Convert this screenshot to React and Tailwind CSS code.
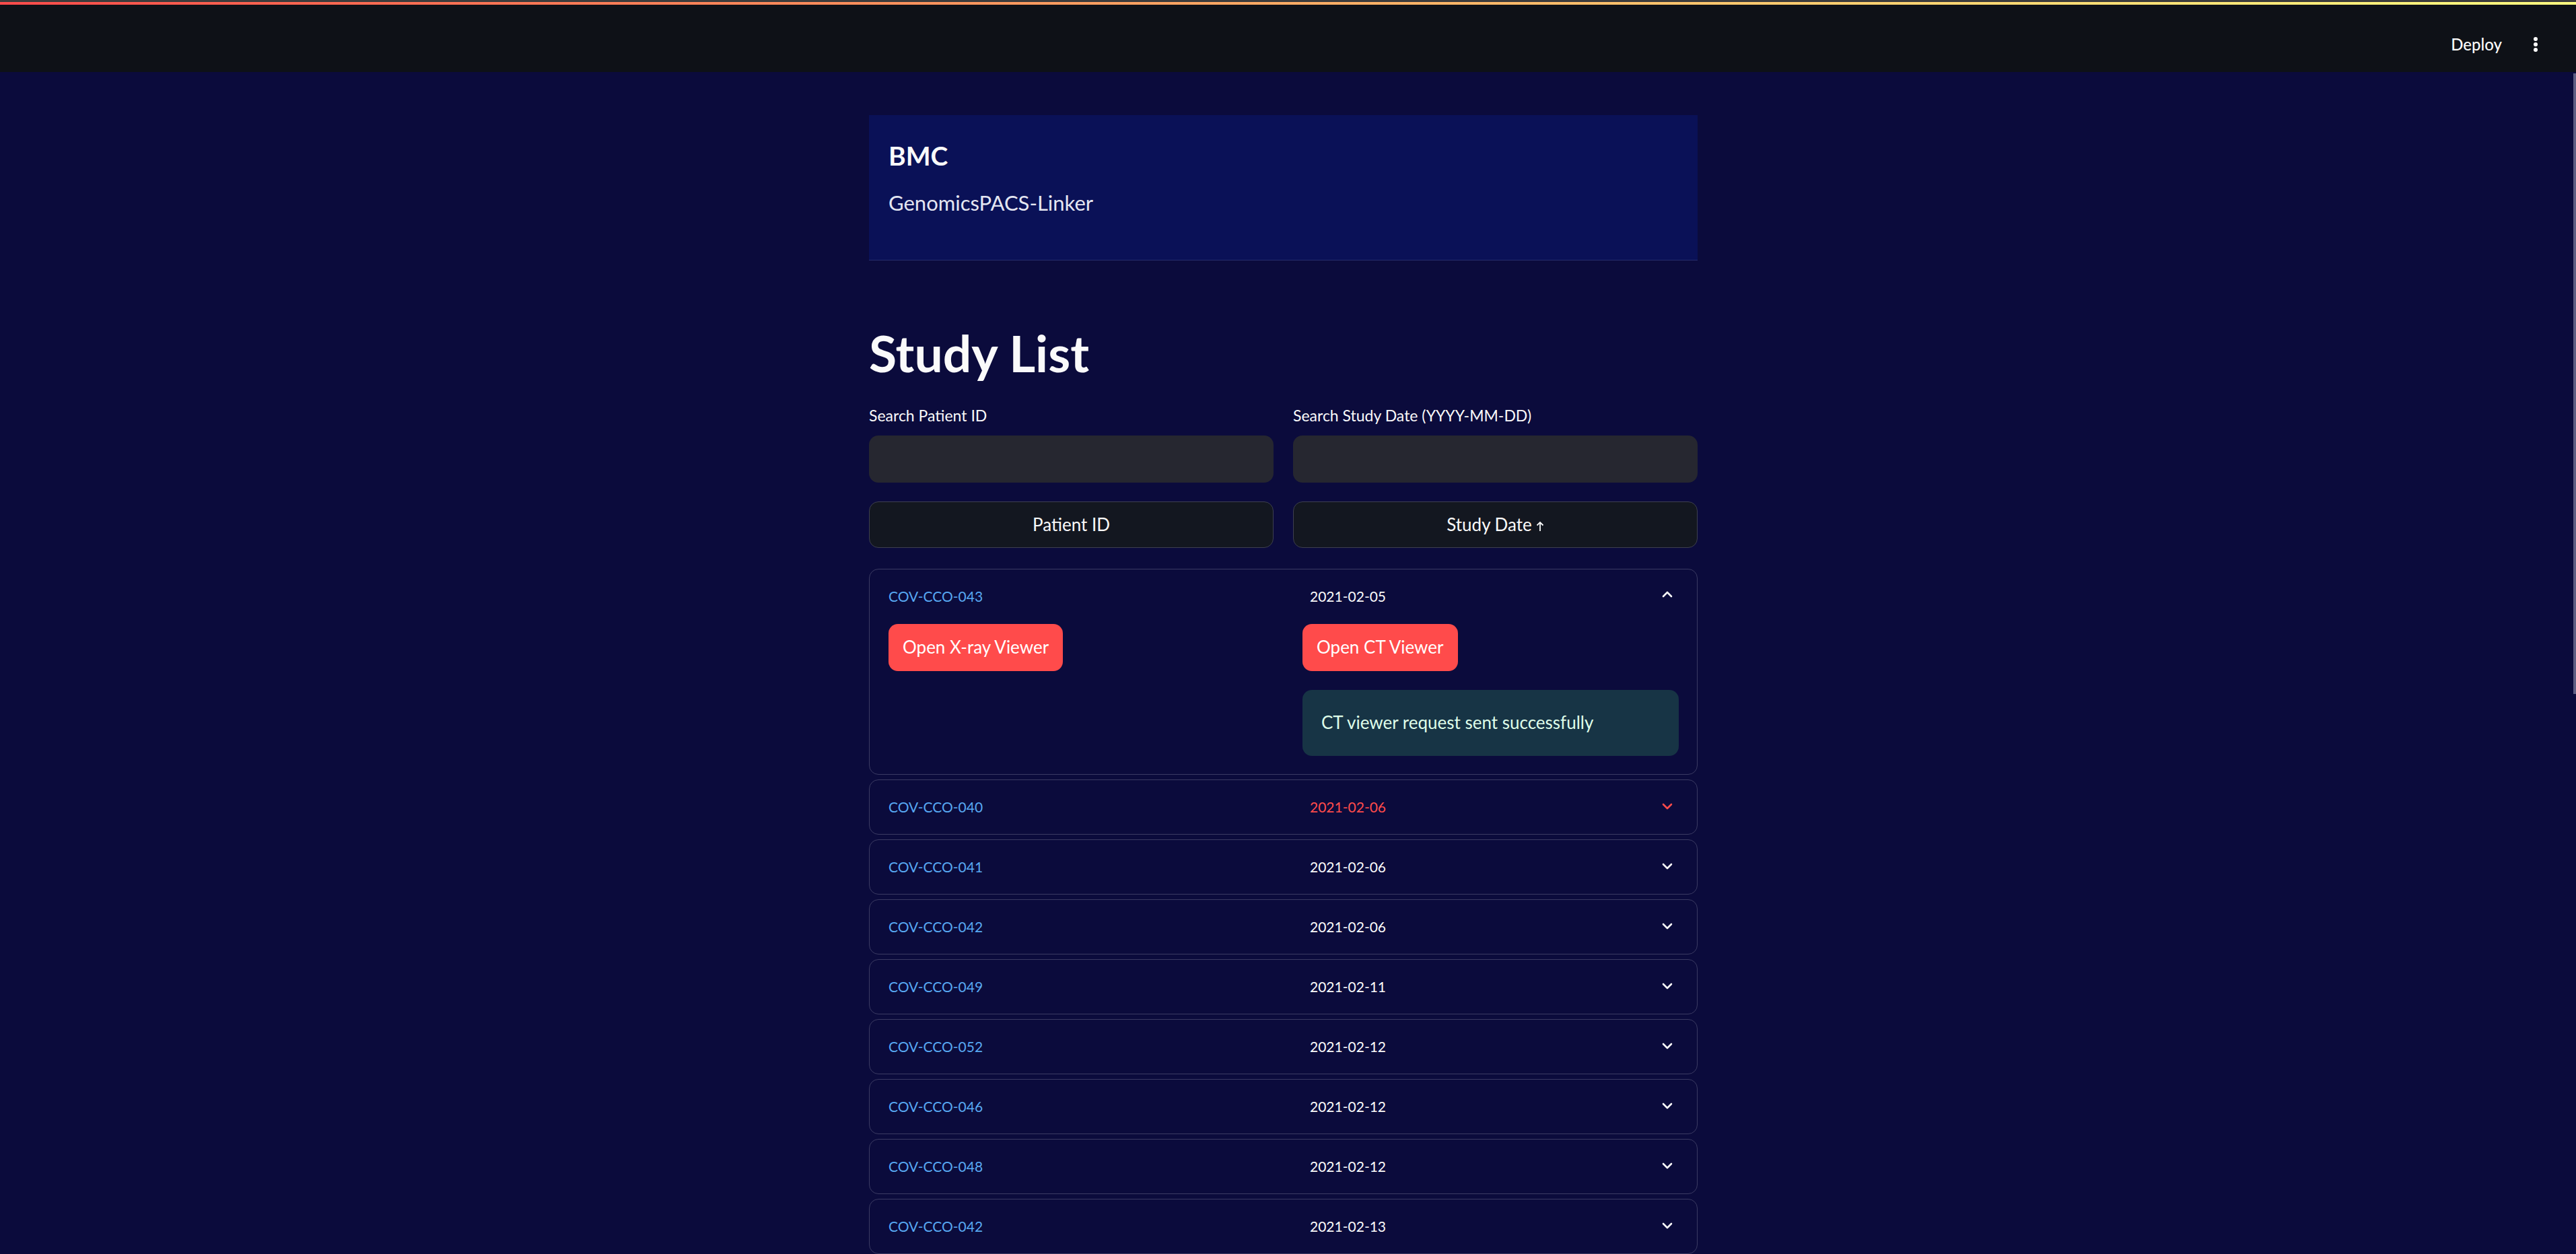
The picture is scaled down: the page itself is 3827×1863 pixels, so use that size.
import React from "react";

const studies = [
  { id: "COV-CCO-040", date: "2021-02-06", hover: true },
  { id: "COV-CCO-041", date: "2021-02-06" },
  { id: "COV-CCO-042", date: "2021-02-06" },
  { id: "COV-CCO-049", date: "2021-02-11" },
  { id: "COV-CCO-052", date: "2021-02-12" },
  { id: "COV-CCO-046", date: "2021-02-12" },
  { id: "COV-CCO-048", date: "2021-02-12" },
  { id: "COV-CCO-042", date: "2021-02-13" },
];

function Chevron({ up, className }) {
  return (
    <svg width="18" height="11" viewBox="0 0 18 11" className={className}>
      <polyline
        points={up ? "3,9 9,3 15,9" : "3,2 9,8 15,2"}
        fill="none"
        stroke="currentColor"
        strokeWidth="2.6"
        strokeLinecap="round"
        strokeLinejoin="round"
      />
    </svg>
  );
}

function Row({ study }) {
  return (
    <div className="rounded-[14px] border border-[#3b3b63]">
      <div className="h-[80px] pl-[28px] pr-[35px] grid grid-cols-[626px_1fr_auto] items-center text-[21px]">
        <span className="text-[#58a8f2]">{study.id}</span>
        <span className={study.hover ? "text-[#ff4b4b]" : "text-[#fafafa]"}>{study.date}</span>
        <Chevron className={study.hover ? "text-[#ff4b4b]" : "text-[#fafafa]"} />
      </div>
    </div>
  );
}

export default function App() {
  return (
    <div
      className="relative h-[1863px] w-full overflow-hidden bg-[#0b0b3c] text-[#fafafa]"
      style={{ fontFamily: "Lato, 'Noto Sans', sans-serif" }}
    >
      {/* top bar */}
      <div className="h-[3px] bg-[#3c3c3c]" />
      <div className="h-[4px] bg-gradient-to-r from-[#ff4b4b] to-[#fffd80]" />
      <div className="h-[100px] bg-[#0e1117] flex items-center justify-end pt-[18px] pr-[57px] gap-[47px]">
        <span className="text-[24px] font-medium">Deploy</span>
        <div className="flex flex-col gap-[2px]">
          <span className="w-[6px] h-[6px] rounded-full bg-white" />
          <span className="w-[6px] h-[6px] rounded-full bg-white" />
          <span className="w-[6px] h-[6px] rounded-full bg-white" />
        </div>
      </div>

      {/* scrollbar thumb */}
      <div className="absolute right-0 top-[109px] w-[4px] h-[922px] bg-[#5e5e82]" />

      <main className="ml-[1291px] w-[1231px] pt-[64px]">
        {/* banner */}
        <div className="bg-[#0a1157] border-b border-[#252c6c] pl-[29px] pt-[37px] pb-[66px]">
          <div className="text-[39px] leading-[1.2] font-bold">BMC</div>
          <div className="mt-[28px] text-[31px] leading-[1.2] text-[#e4e6f2]">GenomicsPACS-Linker</div>
        </div>

        <h1 className="mt-[92px] text-[75px] leading-[1.2] font-bold">Study List</h1>

        <div className="mt-[34px] grid grid-cols-2 gap-x-[29px]">
          <div>
            <label className="block text-[23px] leading-[1.25]">Search Patient ID</label>
            <div className="mt-[15px] h-[70px] rounded-[14px] bg-[#262730]" />
          </div>
          <div>
            <label className="block text-[23px] leading-[1.25]">Search Study Date (YYYY-MM-DD)</label>
            <div className="mt-[15px] h-[70px] rounded-[14px] bg-[#262730]" />
          </div>
          <button className="mt-[28px] h-[69px] rounded-[14px] bg-[#131720] border border-[#3d3f4f] text-[26px] text-[#fafafa]">
            Patient ID
          </button>
          <button className="mt-[28px] h-[69px] rounded-[14px] bg-[#131720] border border-[#3d3f4f] text-[26px] text-[#fafafa] flex items-center justify-center gap-[6px]">
            Study Date
            <svg width="12" height="16" viewBox="0 0 12 16" className="mt-[6px]">
              <path d="M6 15V2M1.5 6.5 6 2l4.5 4.5" fill="none" stroke="currentColor" strokeWidth="1.8" />
            </svg>
          </button>
        </div>

        <div className="mt-[31px] flex flex-col gap-[7px]">
          {/* expanded study */}
          <div className="rounded-[14px] border border-[#3b3b63]">
            <div className="h-[80px] pl-[28px] pr-[35px] grid grid-cols-[626px_1fr_auto] items-center text-[21px]">
              <span className="text-[#58a8f2]">COV-CCO-043</span>
              <span>2021-02-05</span>
              <Chevron up className="text-[#fafafa] -mt-[6px]" />
            </div>
            <div className="pt-[1px] pb-[27px] pl-[28px] pr-[27px] grid grid-cols-[615px_1fr]">
              <div>
                <button className="h-[70px] px-[21px] rounded-[14px] bg-[#ff4b4b] text-[26px] text-white">
                  Open X-ray Viewer
                </button>
              </div>
              <div>
                <button className="h-[70px] px-[21px] rounded-[14px] bg-[#ff4b4b] text-[26px] text-white">
                  Open CT Viewer
                </button>
                <div className="mt-[28px] h-[98px] rounded-[14px] bg-[#173445] px-[28px] flex items-center text-[26px] text-[#dffde9]">
                  CT viewer request sent successfully
                </div>
              </div>
            </div>
          </div>

          {studies.map((s, i) => (
            <Row key={i} study={s} />
          ))}
        </div>
      </main>
    </div>
  );
}
